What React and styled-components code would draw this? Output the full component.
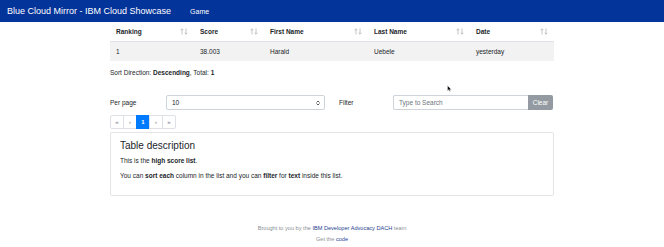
import React from "react"
import styled, { createGlobalStyle } from "styled-components"

const GlobalStyle = createGlobalStyle`
  body {
    margin: 0;
    background: #fff;
    font-family: "Liberation Sans", Arial, sans-serif;
    color: #212529;
    font-size: 6.5px;
  }
`

const Page = styled.div`
  position: relative;
`

const NavBar = styled.div`
  height: 22px;
  background: #03349a;
  display: flex;
  align-items: center;
  padding-left: 7px;
  color: #fff;
`

const Brand = styled.div`
  font-size: 9px;
  margin-right: 19px;
`

const NavLink = styled.div`
  font-size: 7px;
`

const Main = styled.div`
  width: 444px;
  margin: 0 auto;
`

const Table = styled.div`
  display: grid;
  grid-template-columns: 84px 70px 104px 102px 84px;
`

const HeadCell = styled.div`
  height: 20px;
  display: flex;
  align-items: center;
  justify-content: space-between;
  padding: 0 6px;
  font-weight: bold;
  border-bottom: 1px solid #dee2e6;
  box-sizing: border-box;
`

const Cell = styled.div`
  height: 19px;
  display: flex;
  align-items: center;
  padding: 0 6px;
  background: #f2f2f2;
  box-sizing: border-box;
`

const SortIcon = () => (
  <svg width="8" height="7" viewBox="0 0 8 7">
    <path d="M2 6.5V0.8M0.6 2.2L2 0.8L3.4 2.2M6 0.5V6.2M4.6 4.8L6 6.2L7.4 4.8" stroke="#b5b5b5" strokeWidth="0.8" fill="none" />
  </svg>
)

const Summary = styled.div`
  margin-top: 8px;
  height: 9px;
`

const Controls = styled.div`
  margin-top: 17px;
  display: flex;
  align-items: center;
  height: 15px;
`

const Label = styled.div`
  width: ${(p) => p.$w}px;
`

const Select = styled.div`
  width: 159px;
  height: 15px;
  box-sizing: border-box;
  border: 1px solid #ced4da;
  border-radius: 2px;
  display: flex;
  align-items: center;
  justify-content: space-between;
  padding: 0 4px 0 5px;
  margin-right: 14px;
`

const Input = styled.div`
  width: 135px;
  height: 15px;
  box-sizing: border-box;
  border: 1px solid #ced4da;
  border-right: none;
  border-radius: 2px 0 0 2px;
  display: flex;
  align-items: center;
  padding-left: 5px;
  color: #6c757d;
`

const ClearButton = styled.div`
  width: 25px;
  height: 15px;
  background: #939aa1;
  color: #fff;
  border-radius: 0 2px 2px 0;
  display: flex;
  align-items: center;
  justify-content: center;
`

const Pager = styled.div`
  margin-top: 5px;
  display: flex;
  height: 14px;
`

const PageItem = styled.div`
  width: 14px;
  height: 14px;
  box-sizing: border-box;
  border: 1px solid #dee2e6;
  margin-left: -1px;
  display: flex;
  align-items: center;
  justify-content: center;
  font-size: 6px;
  color: ${(p) => (p.$active ? "#fff" : "#6c757d")};
  background: ${(p) => (p.$active ? "#007bff" : "#fff")};
  border-color: ${(p) => (p.$active ? "#007bff" : "#dee2e6")};
  font-weight: ${(p) => (p.$active ? "bold" : "normal")};
  &:first-child {
    margin-left: 0;
    border-radius: 2px 0 0 2px;
  }
  &:last-child {
    border-radius: 0 2px 2px 0;
  }
`

const Card = styled.div`
  margin-top: 3px;
  height: 64px;
  box-sizing: border-box;
  border: 1px solid #e5e5e5;
  border-radius: 2px;
  padding: 7px 9px;
`

const CardTitle = styled.div`
  font-size: 10px;
  margin-bottom: 5px;
`

const Para = styled.div`
  line-height: 9px;
  margin-bottom: 6px;
`

const Footer = styled.div`
  margin-top: 27px;
  text-align: center;
  color: #8a8f94;
  font-size: 5.6px;
  line-height: 11px;
`

const FooterLink = styled.span`
  color: #1f3f8f;
`

const Cursor = styled.svg`
  position: absolute;
  left: 447px;
  top: 85px;
`

const columns = ["Ranking", "Score", "First Name", "Last Name", "Date"]
const row = ["1", "38.003", "Harald", "Uebele", "yesterday"]

export default function App() {
  return (
    <Page>
      <GlobalStyle />
      <NavBar>
        <Brand>Blue Cloud Mirror - IBM Cloud Showcase</Brand>
        <NavLink>Game</NavLink>
      </NavBar>
      <Main>
        <Table>
          {columns.map((c) => (
            <HeadCell key={c}>
              {c}
              <SortIcon />
            </HeadCell>
          ))}
          {row.map((v, i) => (
            <Cell key={i}>{v}</Cell>
          ))}
        </Table>
        <Summary>
          Sort Direction: <b>Descending</b>, Total: <b>1</b>
        </Summary>
        <Controls>
          <Label $w={56}>Per page</Label>
          <Select>
            10
            <svg width="4" height="6" viewBox="0 0 4 6">
              <path d="M0.5 2.5L2 1L3.5 2.5M0.5 3.5L2 5L3.5 3.5" stroke="#343a40" strokeWidth="0.8" fill="none" />
            </svg>
          </Select>
          <Label $w={54}>Filter</Label>
          <Input>Type to Search</Input>
          <ClearButton>Clear</ClearButton>
        </Controls>
        <Pager>
          <PageItem>«</PageItem>
          <PageItem>‹</PageItem>
          <PageItem $active>1</PageItem>
          <PageItem>›</PageItem>
          <PageItem>»</PageItem>
        </Pager>
        <Card>
          <CardTitle>Table description</CardTitle>
          <Para>
            This is the <b>high score list</b>.
          </Para>
          <Para>
            You can <b>sort each</b> column in the list and you can <b>filter</b> for <b>text</b> inside this list.
          </Para>
        </Card>
        <Footer>
          <div>
            Brought to you by the <FooterLink>IBM Developer Advocacy DACH</FooterLink> team
          </div>
          <div>
            Get the <FooterLink>code</FooterLink>
          </div>
        </Footer>
      </Main>
      <Cursor width="5" height="7" viewBox="0 0 5 7">
        <path d="M0.5 0.5V6L1.8 4.8L2.8 6.6L3.6 6.2L2.7 4.4H4.4Z" fill="#111" stroke="#fff" strokeWidth="0.4" />
      </Cursor>
    </Page>
  )
}
